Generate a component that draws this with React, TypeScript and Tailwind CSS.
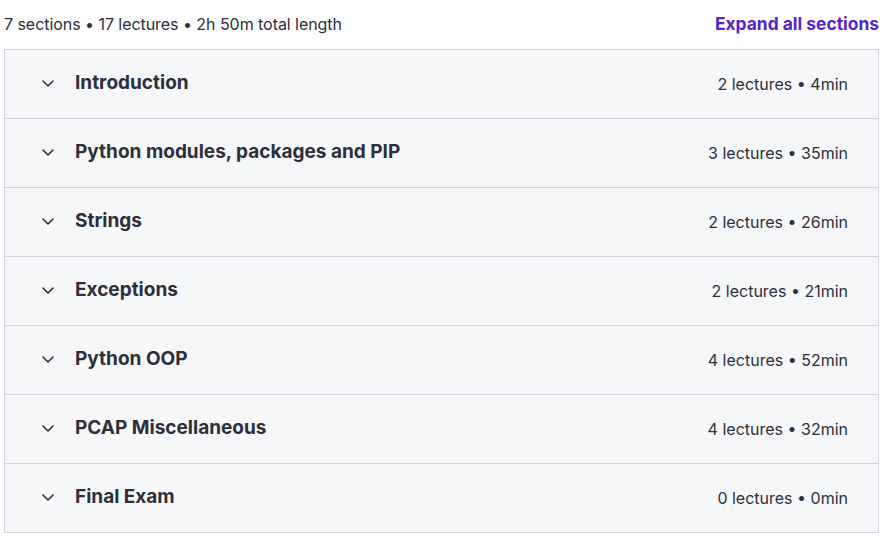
import React from "react";

const sections = [
  ["Introduction", "2 lectures • 4min"],
  ["Python modules, packages and PIP", "3 lectures • 35min"],
  ["Strings", "2 lectures • 26min"],
  ["Exceptions", "2 lectures • 21min"],
  ["Python OOP", "4 lectures • 52min"],
  ["PCAP Miscellaneous", "4 lectures • 32min"],
  ["Final Exam", "0 lectures • 0min"],
];

function Chevron() {
  return (
    <svg width="12" height="7" viewBox="0 0 12 7" fill="none" stroke="#2d2f3d" strokeWidth="1.6" strokeLinecap="round" strokeLinejoin="round">
      <path d="M1 1l5 5 5-5" />
    </svg>
  );
}

export default function App() {
  return (
    <div className="w-[883px] h-[537px] bg-white text-[#2d2f3b]" style={{ fontFamily: "Inter, 'Noto Sans', sans-serif" }}>
      <div className="ml-[4px] w-[875px]">
        <div className="h-[49px] flex items-center justify-between pb-[2px]">
          <span className="text-[16px] tracking-[-0.05px]">7 sections • 17 lectures • 2h 50m total length</span>
          <span className="text-[17.4px] font-bold text-[#5624d0] mt-[2px]">Expand all sections</span>
        </div>
        <div className="border border-[#d1d4e0]">
          {sections.map(([title, meta], i) => (
            <div
              key={title}
              className={`h-[68px] bg-[#f6f7f9] flex items-center justify-between pl-[37px] pr-[30px] ${i > 0 ? "box-content border-t border-[#d1d4e0]" : ""}`}
            >
              <div className="flex items-center gap-[21px] -mt-[2px]">
                <Chevron />
                <span className="text-[19px] font-bold">{title}</span>
              </div>
              <span className="text-[16px]">{meta}</span>
            </div>
          ))}
        </div>
      </div>
    </div>
  );
}
